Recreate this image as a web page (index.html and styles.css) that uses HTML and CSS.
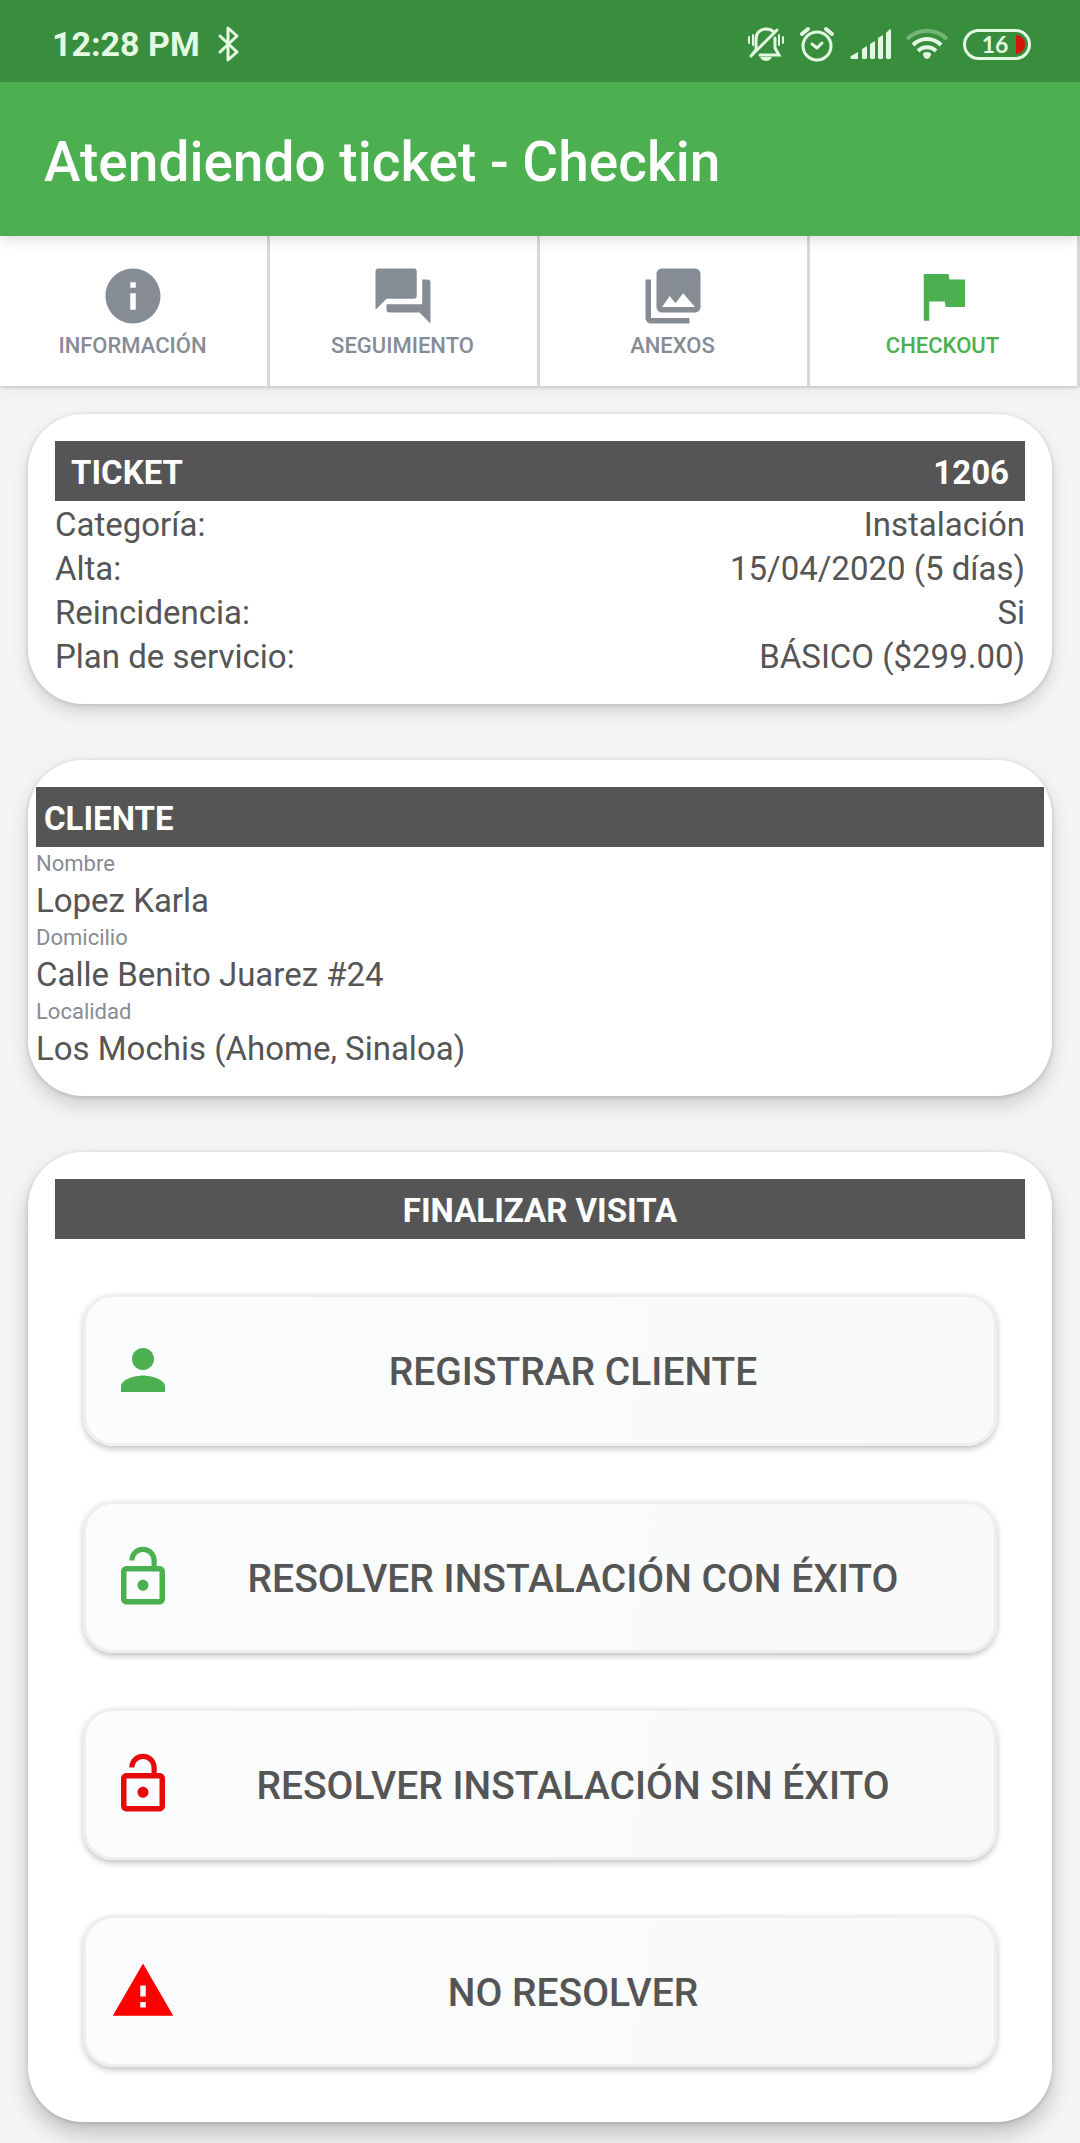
FILE: index.html
```html
<!DOCTYPE html>
<html lang="es">
<head>
    <meta charset="UTF-8">
    <meta name="viewport" content="width=device-width, initial-scale=1.0">
    <title>Atendiendo ticket - Checkin</title>
    <link rel="stylesheet" href="styles.css">
</head>

<body>
    <!-- barra de estado -->
    <div class="status">
        <span class="hora">12:28 PM</span>
        <svg class="bluetooth" width="22" height="36" viewBox="0 0 22 36" fill="none" stroke="currentColor" stroke-width="3" stroke-linejoin="round" stroke-linecap="round">
            <path d="M2 10l17 16-9 8V2l9 8L2 26"/>
        </svg>
        <div class="status-iconos">
            <svg width="36" height="36" viewBox="0 0 36 36" fill="none" stroke="currentColor" stroke-width="3" stroke-linecap="round">
                <path d="M8 22V14c0-7 4-11 10-11 4 0 6 1 8 3M27 12v10l4 7H12"/>
                <path d="M3 30L29 4"/>
                <path d="M1 11v6M5 9v10M31 9v10M35 11v6" stroke-width="2"/>
                <path d="M7 24l-3 4" stroke-width="2"/>
                <path d="M12 31h12c-1 2-3 4-6 4s-5-2-6-4z" fill="currentColor" stroke="none"/>
            </svg>
            <svg width="36" height="36" viewBox="0 0 36 36" fill="none" stroke="currentColor" stroke-width="3" stroke-linecap="round" stroke-linejoin="round">
                <circle cx="18" cy="20" r="14"/>
                <path d="M13 18l5 4 5-5"/>
                <path d="M3 8l6-5M33 8l-6-5" stroke-width="4"/>
            </svg>
            <svg width="41" height="32" viewBox="0 0 41 32" fill="currentColor">
                <path d="M1 28l7-4v7H2c-2 0-2-2-1-3z"/>
                <path d="M12 21l5-3v12l-1 1h-3l-1-1zM20 16l5-3v17l-1 1h-3l-1-1zM28 10l5-3v23l-1 1h-3l-1-1zM36 5l4-4 1 1v28l-1 1h-3l-1-1z"/>
            </svg>
            <svg width="42" height="34" viewBox="1 0 42 34" fill="none" stroke="currentColor" stroke-width="4">
                <path d="M2 12c12-11 28-11 40 0" opacity=".35"/>
                <path d="M8 18c8-8 20-8 28 0"/>
                <path d="M13 24c5-5 13-5 18 0"/>
                <path d="M22 25c3 0 4 1 4 2 0 2-2 5-4 5s-4-3-4-5c0-1 1-2 4-2z" fill="currentColor" stroke="none"/>
            </svg>
            <span class="bateria">16<i class="carga"></i></span>
        </div>
    </div>

    <header class="titulo">
        <h1>Atendiendo ticket - Checkin</h1>
    </header>

    <!-- pestañas -->
    <nav class="tabs">
        <a class="tab" href="#informacion">
            <svg class="icono" viewBox="0 0 24 24"><path d="M12 2C6.48 2 2 6.48 2 12s4.48 10 10 10 10-4.48 10-10S17.52 2 12 2zm1 15h-2v-6h2v6zm0-8h-2V7h2v2z"/></svg>
            <span>INFORMACIÓN</span>
        </a>
        <a class="tab" href="#seguimiento">
            <svg class="icono" viewBox="0 0 24 24"><path d="M21 6h-2v9H6v2c0 .55.45 1 1 1h11l4 4V7c0-.55-.45-1-1-1zm-4 6V3c0-.55-.45-1-1-1H3c-.55 0-1 .45-1 1v14l4-4h10c.55 0 1-.45 1-1z"/></svg>
            <span>SEGUIMIENTO</span>
        </a>
        <a class="tab" href="#anexos">
            <svg class="icono" viewBox="0 0 24 24"><path d="M22 16V4c0-1.100-.9-2-2-2H8c-1.100 0-2 .9-2 2v12c0 1.100.9 2 2 2h12c1.100 0 2-.9 2-2zM8 16l2.800-4 2.100 2.600L15.700 11 20 16zM2 6v14c0 1.100.9 2 2 2h14v-2H4V6H2z"/></svg>
            <span>ANEXOS</span>
        </a>
        <a class="tab activa" href="#checkout">
            <svg class="icono" viewBox="0 0 24 24"><path d="M14.400 6L14 4H5v17h2v-7h5.600l.4 2h7V6z"/></svg>
            <span>CHECKOUT</span>
        </a>
    </nav>

    <main>
        <!-- datos del ticket -->
        <section class="card">
            <h2 class="barra"><span>TICKET</span><span>1206</span></h2>
            <dl class="datos">
                <div><dt>Categoría:</dt><dd>Instalación</dd></div>
                <div><dt>Alta:</dt><dd>15/04/2020 (5 días)</dd></div>
                <div><dt>Reincidencia:</dt><dd>Si</dd></div>
                <div><dt>Plan de servicio:</dt><dd>BÁSICO ($299.00)</dd></div>
            </dl>
        </section>

        <!-- datos del cliente -->
        <section class="card card-cliente">
            <h2 class="barra">CLIENTE</h2>
            <dl class="cliente">
                <dt>Nombre</dt>
                <dd>Lopez Karla</dd>
                <dt>Domicilio</dt>
                <dd>Calle Benito Juarez #24</dd>
                <dt>Localidad</dt>
                <dd>Los Mochis (Ahome, Sinaloa)</dd>
            </dl>
        </section>

        <!-- acciones para cerrar la visita -->
        <section class="card card-visita">
            <h2 class="barra centrada">FINALIZAR VISITA</h2>
            <div class="acciones">
                <button type="button" class="btn">
                    <svg class="icono verde" viewBox="0 0 24 24"><path d="M12 12c2.210 0 4-1.790 4-4s-1.790-4-4-4-4 1.790-4 4 1.790 4 4 4zm0 2c-2.670 0-8 1.340-8 4v2h16v-2c0-2.660-5.330-4-8-4z"/></svg>
                    <span>REGISTRAR CLIENTE</span>
                </button>
                <button type="button" class="btn">
                    <svg class="icono verde" viewBox="0 0 24 24"><path d="M12 17c1.100 0 2-.9 2-2s-.9-2-2-2-2 .9-2 2 .9 2 2 2zm6-9h-1V6c0-2.760-2.240-5-5-5S7 3.240 7 6h1.900c0-1.710 1.390-3.100 3.100-3.100s3.100 1.390 3.100 3.100v2H6c-1.100 0-2 .9-2 2v10c0 1.100.9 2 2 2h12c1.100 0 2-.9 2-2V10c0-1.100-.9-2-2-2zm0 12H6V10h12v10z"/></svg>
                    <span>RESOLVER INSTALACIÓN CON ÉXITO</span>
                </button>
                <button type="button" class="btn">
                    <svg class="icono rojo" viewBox="0 0 24 24"><path d="M12 17c1.100 0 2-.9 2-2s-.9-2-2-2-2 .9-2 2 .9 2 2 2zm6-9h-1V6c0-2.760-2.240-5-5-5S7 3.240 7 6h1.900c0-1.710 1.390-3.100 3.100-3.100s3.100 1.390 3.100 3.100v2H6c-1.100 0-2 .9-2 2v10c0 1.100.9 2 2 2h12c1.100 0 2-.9 2-2V10c0-1.100-.9-2-2-2zm0 12H6V10h12v10z"/></svg>
                    <span>RESOLVER INSTALACIÓN SIN ÉXITO</span>
                </button>
                <button type="button" class="btn">
                    <svg class="icono alerta" viewBox="0 0 24 24"><path d="M1 21h22L12 2 1 21zm12-3h-2v-2h2v2zm0-4h-2v-4h2v4z"/></svg>
                    <span>NO RESOLVER</span>
                </button>
            </div>
        </section>
    </main>
</body>

</html>
```

FILE: styles.css
```css
* {
    box-sizing: border-box;
}
body {
    margin: 0;
    font-family: Roboto, "Liberation Sans", sans-serif;
    font-size: 33px;
    line-height: 44px;
    color: #555;
    background-color: #f4f5f7;
}
h1, h2, dl, dd {
    margin: 0;
}

/* barra de estado */
.status {
    position: relative;
    z-index: 1;
    display: flex;
    align-items: center;
    height: 82px;
    padding: 6px 49px 0 52px;
    background-color: #388e3c;
    color: #e4f9e2;
}
.hora {
    font-size: 34px;
    font-weight: 700;
}
.bluetooth {
    margin-left: 18px;
}
.status-iconos {
    display: flex;
    align-items: center;
    gap: 15px;
    margin-left: auto;
}
.bateria {
    position: relative;
    width: 68px;
    height: 31px;
    padding-right: 4px;
    border: 3px solid;
    border-radius: 16px;
    font-family: Lato, Roboto, sans-serif;
    font-size: 23px;
    font-weight: 700;
    line-height: 25px;
    text-align: center;
}
.carga {
    position: absolute;
    top: 3px;
    right: 3px;
    width: 9px;
    height: 19px;
    border-radius: 0 9px 9px 0;
    background-color: #d5140a;
}

/* titulo */
.titulo {
    position: relative;
    padding: 48px 44px 42px;
    background-color: #4caf50;
    color: #fff;
    box-shadow: 0 2px 14px rgba(0, 0, 0, 0.16);
}
.titulo h1 {
    font-size: 55px;
    font-weight: 500;
    line-height: 64px;
}

/* pestañas */
.tabs {
    display: grid;
    grid-template-columns: repeat(4, 1fr);
    background-color: #fff;
    box-shadow: 0 2px 3px rgba(0, 0, 0, 0.14), 0 4px 16px rgba(0, 0, 0, 0.06);
}
.tab {
    display: flex;
    flex-direction: column;
    align-items: center;
    gap: 2px;
    padding: 27px 2px 25px 0;
    border-right: 3px solid #d7d8da;
    font-size: 22px;
    font-weight: 500;
    line-height: 30px;
    text-decoration: none;
    color: #868c94;
}
.activa {
    color: #4caf50;
}
.icono {
    flex: none;
    width: 66px;
    height: 66px;
    fill: currentColor;
}

/* tarjetas */
main {
    display: flex;
    flex-direction: column;
    gap: 56px;
    padding: 28px 28px 21px;
}
.card {
    padding: 27px 27px 25px;
    border-radius: 55px;
    background-color: #fff;
    box-shadow: 0 1px 4px rgba(0, 0, 0, 0.16), 0 8px 18px rgba(0, 0, 0, 0.14);
}
.barra {
    display: flex;
    justify-content: space-between;
    padding: 10px 16px 6px;
    background-color: #555;
    color: #fff;
    font-size: 33px;
    font-weight: 700;
}
.centrada {
    justify-content: center;
}
.datos, .cliente {
    padding-top: 2px;
}
.datos div {
    display: flex;
    justify-content: space-between;
}

.card-cliente {
    padding: 27px 8px 25px;
    box-shadow: 0 1px 4px rgba(0, 0, 0, 0.16), 0 9px 20px rgba(0, 0, 0, 0.17);
}
.card-cliente .barra {
    padding: 10px 8px 6px;
}
.cliente dt {
    font-size: 22px;
    line-height: 30px;
    color: #868c94;
}

.card-visita {
    box-shadow: 0 1px 4px rgba(0, 0, 0, 0.16), 0 12px 22px rgba(0, 0, 0, 0.22);
}

/* botones */
.acciones {
    display: flex;
    flex-direction: column;
    gap: 55px;
    padding: 55px 28px 30px;
}
.btn {
    display: flex;
    align-items: center;
    width: 100%;
    height: 152px;
    padding: 0 24px;
    border: 3px solid #eeeeef;
    border-radius: 30px;
    background: linear-gradient(100deg, #fbfcfe, #fafbfb 50%, #f9f9f9);
    background-origin: border-box;
    box-shadow: 0 3px 6px rgba(0, 0, 0, 0.24);
    font-family: inherit;
    font-size: 39px;
    font-weight: 500;
    color: #555;
    cursor: pointer;
}
.btn span {
    flex: 1;
    padding-top: 4px;
}
.verde {
    fill: #4caf50;
}
.rojo {
    fill: #e60a0c;
}
.alerta {
    fill: #ff0000;
}
```
